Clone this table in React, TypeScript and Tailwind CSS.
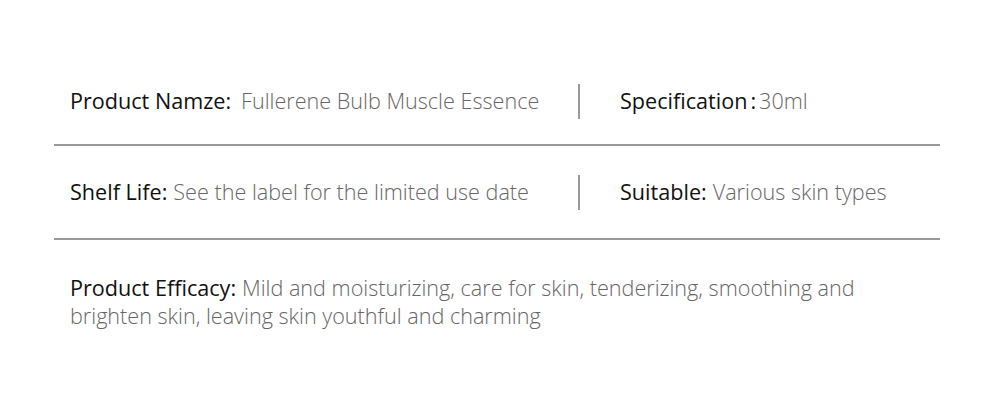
export default function App() {
  return (
    <div className="w-[1000px] h-[420px] bg-white font-['Open_Sans',sans-serif] text-[21.6px]">
      <div className="ml-[54px] w-[886px] pt-[58px]">
        <div className="flex items-center h-[86px]">
          <div className="w-[524px] pl-[16px] flex items-center">
            <span className="text-[#111]">Product Namze:</span>
            <span className="ml-[10px] text-[#666] font-light">Fullerene Bulb Muscle Essence</span>
          </div>
          <div className="w-[2px] h-[35px] bg-[#999]" />
          <div className="pl-[40px] flex items-center">
            <span className="text-[#111]">Specification</span>
            <span className="ml-[3px] text-[#111]">:</span>
            <span className="ml-[3px] text-[#666] font-light">30ml</span>
          </div>
        </div>
        <div className="h-[2px] bg-[#9a9a9a]" />
        <div className="flex items-center h-[92px]">
          <div className="w-[524px] pl-[16px]">
            <span className="text-[#111]">Shelf Life:</span>
            <span className="ml-[6px] text-[#666] font-light">See the label for the limited use date</span>
          </div>
          <div className="w-[2px] h-[35px] bg-[#999]" />
          <div className="pl-[40px]">
            <span className="text-[#111]">Suitable:</span>
            <span className="ml-[6px] text-[#666] font-light">Various skin types</span>
          </div>
        </div>
        <div className="h-[2px] bg-[#9a9a9a]" />
        <div className="pt-[34px] pl-[16px] pr-[40px] leading-[28px]">
          <span className="text-[#111]">Product Efficacy:</span>
          <span className="ml-[6px] text-[#666] font-light">
            Mild and moisturizing, care for skin, tenderizing, smoothing and brighten skin, leaving skin youthful and charming
          </span>
        </div>
      </div>
    </div>
  );
}
